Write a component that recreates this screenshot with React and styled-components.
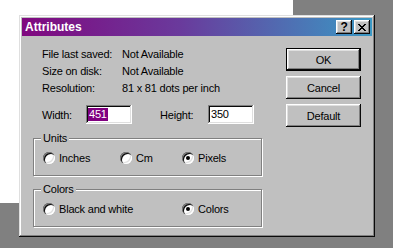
import styled, { createGlobalStyle } from "styled-components"

const GlobalStyle = createGlobalStyle`
    html, body {
        margin : 0;
        padding : 0;
    }
    body {
        font-family : "Liberation Sans", Arial, sans-serif;
        font-size : 11px;
        color : #000;
        letter-spacing : -0.2px;
    }
`

const raised = `
    box-shadow : inset -1px -1px #0a0a0a, inset 1px 1px #fff,
        inset -2px -2px #808080, inset 2px 2px #dfdfdf;
`

const Desktop = styled.div`
    width : 393px;
    height : 248px;
    box-sizing : border-box;
    padding : 15px 0 0 19px;
    overflow : hidden;
    background : linear-gradient(#fff, #fff) 0 0 / 293px 203px no-repeat, #808080;
`
const Window = styled.div`
    width : 356px;
    height : 222px;
    box-sizing : border-box;
    padding : 3px;
    background : #c0c0c0;
    box-shadow : inset -1px -1px #0a0a0a, inset 1px 1px #dfdfdf,
        inset -2px -2px #808080, inset 2px 2px #fff;
    display : flex;
    flex-direction : column;
`
const TitleBar = styled.div`
    height : 18px;
    display : flex;
    align-items : center;
    justify-content : space-between;
    padding : 0 2px 0 3px;
    background : linear-gradient(90deg, #80087f, #6a3a9c 45%, #3a98c4);
`
const Title = styled.span`
    color : #fff;
    font-weight : bold;
    font-size : 12px;
    letter-spacing : 0;
`
const TitleButtons = styled.div`
    display : flex;
    gap : 2px;
`
const TitleButton = styled.div`
    width : 16px;
    height : 14px;
    box-sizing : border-box;
    background : #c0c0c0;
    ${raised}
    display : flex;
    align-items : center;
    justify-content : center;
    font-size : 12px;
    font-weight : bold;
    line-height : 14px;
`
const Body = styled.div`
    flex : 1;
    display : flex;
    gap : 23px;
    padding : 10px 11px 0;
`
const LeftColumn = styled.div`
    width : 230px;
    display : flex;
    flex-direction : column;
`
const InfoGrid = styled.div`
    display : grid;
    grid-template-columns : 80px auto;
    line-height : 17px;
    margin-left : 9px;
`
const SizeRow = styled.div`
    display : grid;
    grid-template-columns : 44px 46px 28px 48px 46px;
    align-items : center;
    height : 19px;
    margin : 8px 0 0 9px;
`
const Field = styled.div`
    height : 19px;
    box-sizing : border-box;
    background : #fff;
    box-shadow : inset -1px -1px #fff, inset 1px 1px #808080,
        inset -2px -2px #dfdfdf, inset 2px 2px #0a0a0a;
    display : flex;
    align-items : center;
    padding : 0 2px;
`
const FieldText = styled.span`
    line-height : 13px;
    padding : 0 1px;
    background : ${p => p.$selected ? "#800080" : "transparent"};
    color : ${p => p.$selected ? "#fff" : "#000"};
`
const Group = styled.div`
    height : 38px;
    box-sizing : border-box;
    margin-top : ${p => p.$gap}px;
    border : 1px solid #808080;
    box-shadow : inset 1px 1px #fff, 1px 1px #fff;
    width : 229px;
`
const Caption = styled.div`
    display : table;
    margin : -8px 0 0 7px;
    padding : 0 2px;
    line-height : 14px;
    background : #c0c0c0;
`
const Options = styled.div`
    display : grid;
    grid-template-columns : ${p => p.$columns};
    margin : 6px 0 0 9px;
`
const Option = styled.div`
    display : flex;
    align-items : center;
    gap : 4px;
    height : 14px;
`
const Radio = styled.span`
    width : 12px;
    height : 12px;
    border-radius : 50%;
    background : #fff;
    box-shadow : inset 1px 1px #808080, inset 2px 2px #0a0a0a,
        inset -1px -1px #fff, inset -2px -2px #dfdfdf;
    display : flex;
    align-items : center;
    justify-content : center;
    &::after {
        content : "";
        width : 4px;
        height : 4px;
        border-radius : 50%;
        background : ${p => p.$checked ? "#000" : "transparent"};
    }
`
const ButtonColumn = styled.div`
    display : flex;
    flex-direction : column;
    gap : 5px;
    margin-top : 2px;
`
const PushButton = styled.div`
    width : 75px;
    height : 23px;
    box-sizing : border-box;
    border : ${p => p.$default ? "1px solid #000" : "none"};
    ${raised}
    display : flex;
    align-items : center;
    justify-content : center;
`

const CloseGlyph = () => (
    <svg width="8" height="7" viewBox="0 0 8 7" shapeRendering="crispEdges">
        <path
            fill="#000"
            d="M0 0h2v1H0zM6 0h2v1H6zM1 1h2v1H1zM5 1h2v1H5zM2 2h4v1H2zM3 3h2v1H3zM2 4h4v1H2zM1 5h2v1H1zM5 5h2v1H5zM0 6h2v1H0zM6 6h2v1H6z"
        />
    </svg>
)

const RadioGroup = ({title, gap, columns, options}) => {
    return (
        <Group $gap={gap}>
            <Caption>{title}</Caption>
            <Options $columns={columns}>
                {options.map(o => (
                    <Option key={o.label}>
                        <Radio $checked={o.checked} />
                        {o.label}
                    </Option>
                ))}
            </Options>
        </Group>
    )
}

const App = () => {
    return (
        <Desktop>
            <GlobalStyle />
            <Window>
                <TitleBar>
                    <Title>Attributes</Title>
                    <TitleButtons>
                        <TitleButton>?</TitleButton>
                        <TitleButton><CloseGlyph /></TitleButton>
                    </TitleButtons>
                </TitleBar>
                <Body>
                    <LeftColumn>
                        <InfoGrid>
                            <span>File last saved:</span><span>Not Available</span>
                            <span>Size on disk:</span><span>Not Available</span>
                            <span>Resolution:</span><span>81 x 81 dots per inch</span>
                        </InfoGrid>
                        <SizeRow>
                            <span>Width:</span>
                            <Field><FieldText $selected>451</FieldText></Field>
                            <span />
                            <span>Height:</span>
                            <Field><FieldText>350</FieldText></Field>
                        </SizeRow>
                        <RadioGroup
                            title="Units"
                            gap={14}
                            columns="77px 62px auto"
                            options={[
                                {label : "Inches"},
                                {label : "Cm"},
                                {label : "Pixels", checked : true},
                            ]}
                        />
                        <RadioGroup
                            title="Colors"
                            gap={13}
                            columns="139px auto"
                            options={[
                                {label : "Black and white"},
                                {label : "Colors", checked : true},
                            ]}
                        />
                    </LeftColumn>
                    <ButtonColumn>
                        <PushButton $default>OK</PushButton>
                        <PushButton>Cancel</PushButton>
                        <PushButton>Default</PushButton>
                    </ButtonColumn>
                </Body>
            </Window>
        </Desktop>
    )
}

export default App
